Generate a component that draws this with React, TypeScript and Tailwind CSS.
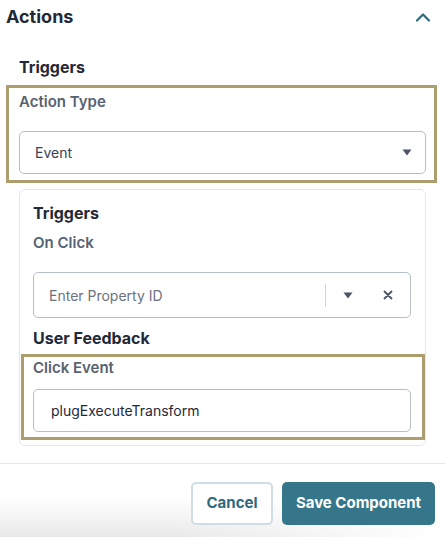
import React from 'react';

function Caret() {
  return (
    <svg width="10" height="7" viewBox="0 0 10 7" className="text-[#4b5563]">
      <path d="M0.5 0.5h9L5 6.5z" fill="currentColor" />
    </svg>
  );
}

export default function App() {
  return (
    <div
      className="relative w-[445px] h-[537px] overflow-hidden bg-white text-[#1f2937]"
      style={{ fontFamily: 'Inter, "Noto Sans", sans-serif' }}
    >
      <div className="pointer-events-none absolute left-0 bottom-0 w-full h-[40px] bg-gradient-to-b from-transparent to-[#e9e9e9] [mask-image:linear-gradient(to_right,black_40%,transparent_100%)]" />

      {/* header */}
      <div className="h-[34px] flex items-center justify-between pl-[6px] pr-[14px]">
        <h2 className="text-[18px] font-bold leading-none">Actions</h2>
        <svg width="16" height="10" viewBox="0 0 16 10" className="text-[#2c6b7c]">
          <path d="M2 8.5 8 2.5l6 6" fill="none" stroke="currentColor" strokeWidth="2.2" strokeLinecap="round" strokeLinejoin="round" />
        </svg>
      </div>

      <div className="mt-[23px] pl-[19px] h-[20px] flex items-center text-[16px] font-bold">Triggers</div>

      {/* highlighted action type */}
      <div className="mt-[8px] ml-[6px] w-[431px] border-[3px] border-[#ad9f6d] pl-[10px] pr-[8px] pt-[4px] pb-[6px]">
        <div className="h-[20px] flex items-center text-[15px] font-semibold text-[#576170]">Action Type</div>
        <div className="mt-[19px] h-[43px] rounded-[5px] border border-[#b8bec7] flex items-center justify-between pl-[15px] pr-[13px]">
          <span className="text-[14px] text-[#374151]">Event</span>
          <Caret />
        </div>
      </div>

      {/* card */}
      <div className="mt-[6px] ml-[19px] w-[407px] rounded-[6px] border border-[#e5e7eb] pt-[13px] pb-[5px]">
        <div className="pl-[13px] h-[20px] flex items-center text-[16px] font-bold">Triggers</div>
        <div className="pl-[13px] mt-[10px] h-[20px] flex items-center text-[15px] font-semibold text-[#576170]">On Click</div>
        <div className="ml-[13px] mr-[14px] mt-[19px] h-[46px] rounded-[5px] border border-[#b8bec7] flex items-center pr-[4px]">
          <span className="flex-1 pl-[15px] text-[14px] text-[#6b7280]">Enter Property ID</span>
          <span className="w-px h-[23px] bg-[#d1d5db]" />
          <span className="w-[44px] flex justify-center">
            <Caret />
          </span>
          <span className="w-[36px] flex justify-center">
            <svg width="10" height="10" viewBox="0 0 10 10" className="text-[#4b5563]">
              <path d="M1.5 1.5l7 7M8.5 1.5l-7 7" stroke="currentColor" strokeWidth="1.8" strokeLinecap="round" />
            </svg>
          </span>
        </div>
        <div className="pl-[13px] mt-[10px] h-[20px] flex items-center text-[16px] font-bold">User Feedback</div>

        {/* highlighted click event */}
        <div className="mt-[6px] ml-px w-[404px] border-[3px] border-[#ad9f6d] pl-[9px] pr-[11px] pt-px pb-[5px]">
          <div className="h-[20px] flex items-center text-[15px] font-semibold text-[#576170]">Click Event</div>
          <div className="mt-[11px] h-[43px] rounded-[5px] border border-[#b8bec7] flex items-center pl-[17px]">
            <span className="text-[14px] text-[#1f2937]">plugExecuteTransform</span>
          </div>
        </div>
      </div>

      <div className="mt-[17px] h-px bg-[#e2e8f0]" />

      {/* footer */}
      <div className="relative z-10 mt-[18px] flex justify-end gap-[9px] pr-[10px]">
        <button className="w-[82px] h-[43px] rounded-[5px] border-2 border-[#cfdde4] bg-white text-[15px] font-bold text-[#2f6a7e]">
          Cancel
        </button>
        <button className="w-[153px] h-[43px] rounded-[5px] bg-[#36768a] text-[15px] font-bold text-white">
          Save Component
        </button>
      </div>
    </div>
  );
}
